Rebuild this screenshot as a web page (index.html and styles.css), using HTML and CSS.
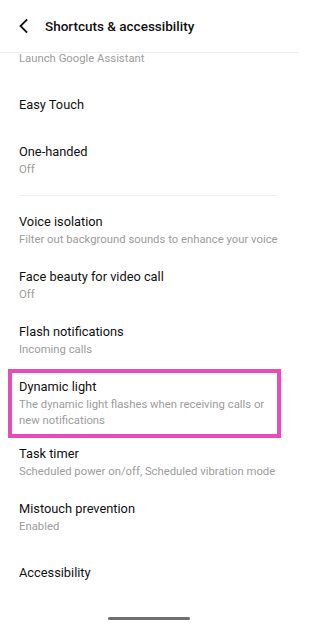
FILE: index.html
```html
<!DOCTYPE html>
<html>
<head>
<meta charset="utf-8">
<link rel="stylesheet" href="styles.css">
</head>
<body>
<div class="screen">
  <header class="topbar">
    <svg class="back" width="12" height="16" viewBox="0 0 12 16"><path d="M8.5 2 L2.5 8 L8.5 14" fill="none" stroke="#111" stroke-width="1.8" stroke-linecap="square"/></svg>
    <div class="title">Shortcuts &amp; accessibility</div>
  </header>
  <div class="list">
    <div class="row cut"><div class="sub">Launch Google Assistant</div></div>
    <div class="row single"><div class="name">Easy Touch</div></div>
    <div class="row"><div class="name">One-handed</div><div class="sub">Off</div></div>
    <div class="divider"></div>
    <div class="row"><div class="name">Voice isolation</div><div class="sub">Filter out background sounds to enhance your voice</div></div>
    <div class="row"><div class="name">Face beauty for video call</div><div class="sub">Off</div></div>
    <div class="row"><div class="name">Flash notifications</div><div class="sub">Incoming calls</div></div>
    <div class="row highlighted"><div class="name">Dynamic light</div><div class="sub">The dynamic light flashes when receiving calls or new notifications</div><div class="mark"></div></div>
    <div class="row"><div class="name">Task timer</div><div class="sub">Scheduled power on/off, Scheduled vibration mode</div></div>
    <div class="row"><div class="name">Mistouch prevention</div><div class="sub">Enabled</div></div>
    <div class="row single"><div class="name">Accessibility</div></div>
  </div>
  <div class="homebar"></div>
</div>
</body>
</html>
```
FILE: styles.css
```css
html, body {
  margin: 0;
  padding: 0;
  background: #fff;
}
body {
  font-family: Roboto, "Noto Sans", sans-serif;
  color: #111;
}
.screen {
  width: 298px;
  height: 628px;
  overflow: hidden;
  display: flex;
  flex-direction: column;
}
.topbar {
  height: 52px;
  border-bottom: 1px solid #ececec;
  display: flex;
  align-items: center;
  flex-shrink: 0;
}
.back {
  margin-left: 18px;
  margin-right: 15px;
}
.title {
  font-size: 13.5px;
  font-weight: 500;
  color: #111;
}
.list {
  display: flex;
  flex-direction: column;
}
.row {
  padding: 9px 20px 10px 19px;
  position: relative;
}
.row.single {
  padding-top: 18px;
  padding-bottom: 18px;
}
.row.cut {
  padding-top: 0;
  padding-bottom: 12px;
}
.row.cut .sub {
  line-height: 12px;
}
.name {
  font-size: 12.8px;
  line-height: 20px;
  color: #111;
}
.sub {
  font-size: 11.3px;
  line-height: 16px;
  color: #9c9c9c;
}
.row.highlighted {
  padding-bottom: 6px;
}
.mark {
  position: absolute;
  top: 1px;
  bottom: -3px;
  left: 8px;
  right: 17px;
  border: 4px solid #ea4bbb;
}
.divider {
  height: 1px;
  background: #efefef;
  margin: 7px 20px 7px 19px;
}
.homebar {
  width: 82px;
  height: 3px;
  border-radius: 2px;
  background: #6e6e6e;
  margin: 16px auto 0;
}
```
